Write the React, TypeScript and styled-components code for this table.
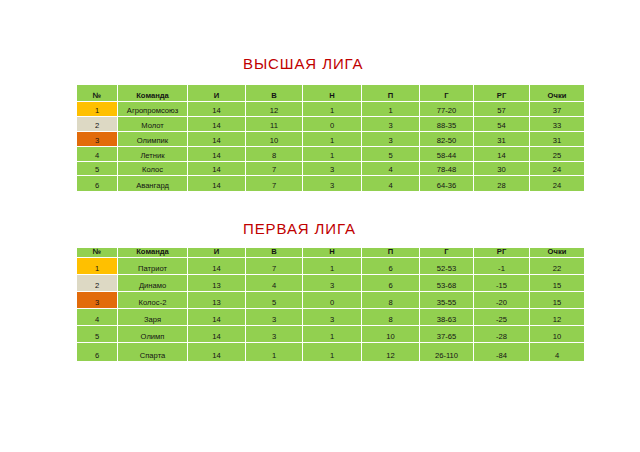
import React from 'react'
import styled, { createGlobalStyle } from 'styled-components'

const GlobalStyle = createGlobalStyle`
	html, body {
		margin: 0;
		padding: 0;
		background: #ffffff;
	}
	body {
		font-family: 'Liberation Sans', Arial, sans-serif;
	}
`

const GREEN = '#92d050'
const GOLD = '#ffc000'
const SILVER = '#ddd9c4'
const BRONZE = '#e26b0a'

const placeColors = [GOLD, SILVER, BRONZE]

const columns = ['№', 'Команда', 'И', 'В', 'Н', 'П', 'Г', 'РГ', 'Очки']
// ширины ячеек без учёта 1px просвета между ними
const colWidths = [40, 69, 57, 56, 58, 57, 53, 55, 54]

type TeamRow = [string, number, number, number, number, string, number, number]

interface League {
	title: string
	headHeight: number
	rowHeights: number[]
	rows: TeamRow[]
	gapTop: number
	titleGap: number
}

const leagues: League[] = [
	{
		title: 'ВЫСШАЯ ЛИГА',
		headHeight: 16,
		rowHeights: [14, 14, 14, 14, 13, 15],
		gapTop: 56,
		titleGap: 13,
		rows: [
			['Агропромсоюз', 14, 12, 1, 1, '77-20', 57, 37],
			['Молот', 14, 11, 0, 3, '88-35', 54, 33],
			['Олимпик', 14, 10, 1, 3, '82-50', 31, 31],
			['Летник', 14, 8, 1, 5, '58-44', 14, 25],
			['Колос', 14, 7, 3, 4, '78-48', 30, 24],
			['Авангард', 14, 7, 3, 4, '64-36', 28, 24],
		],
	},
	{
		title: 'ПЕРВАЯ ЛИГА',
		headHeight: 9,
		rowHeights: [16, 16, 16, 16, 16, 18],
		gapTop: 29,
		titleGap: 11,
		rows: [
			['Патриот', 14, 7, 1, 6, '52-53', -1, 22],
			['Динамо', 13, 4, 3, 6, '53-68', -15, 15],
			['Колос-2', 13, 5, 0, 8, '35-55', -20, 15],
			['Заря', 14, 3, 3, 8, '38-63', -25, 12],
			['Олимп', 14, 3, 1, 10, '37-65', -28, 10],
			['Спарта', 14, 1, 1, 12, '26-110', -84, 4],
		],
	},
]

const Page = styled.div`
	width: 640px;
	height: 452px;
	box-sizing: border-box;
	padding-left: 76px;
	overflow: hidden;
`

const Title = styled.h1<{ $top: number; $gap: number }>`
	margin: ${p => p.$top}px 0 ${p => p.$gap}px 167px;
	font-size: 15px;
	line-height: 15px;
	font-weight: 400;
	letter-spacing: 0.9px;
	color: #c00000;
`

const Table = styled.table`
	border-collapse: separate;
	border-spacing: 1px;
	table-layout: fixed;
	width: 509px;
	font-size: 7.6px;
	color: #141414;
`

const Row = styled.tr<{ $h: number }>`
	height: ${p => p.$h}px;
`

const HeadCell = styled.th`
	background: ${GREEN};
	font-weight: 700;
	text-align: center;
	vertical-align: bottom;
	padding: 0 0 1px;
	line-height: 8px;
`

const Cell = styled.td<{ $bg?: string }>`
	background: ${p => p.$bg || GREEN};
	text-align: center;
	vertical-align: bottom;
	padding: 0 0 1.5px;
	line-height: 9px;
	white-space: nowrap;
`

const Standings: React.FC<{ league: League }> = ({ league }) => (
	<>
		<Title $top={league.gapTop} $gap={league.titleGap}>
			{league.title}
		</Title>
		<Table>
			<colgroup>
				{colWidths.map((w, i) => (
					<col key={i} style={{ width: w }} />
				))}
			</colgroup>
			<thead>
				<Row $h={league.headHeight}>
					{columns.map(c => (
						<HeadCell key={c}>{c}</HeadCell>
					))}
				</Row>
			</thead>
			<tbody>
				{league.rows.map((r, i) => (
					<Row key={r[0]} $h={league.rowHeights[i]}>
						<Cell $bg={placeColors[i]}>{i + 1}</Cell>
						{r.map((v, j) => (
							<Cell key={j}>{v}</Cell>
						))}
					</Row>
				))}
			</tbody>
		</Table>
	</>
)

export default function App() {
	return (
		<>
			<GlobalStyle />
			<Page>
				{leagues.map(l => (
					<Standings key={l.title} league={l} />
				))}
			</Page>
		</>
	)
}
